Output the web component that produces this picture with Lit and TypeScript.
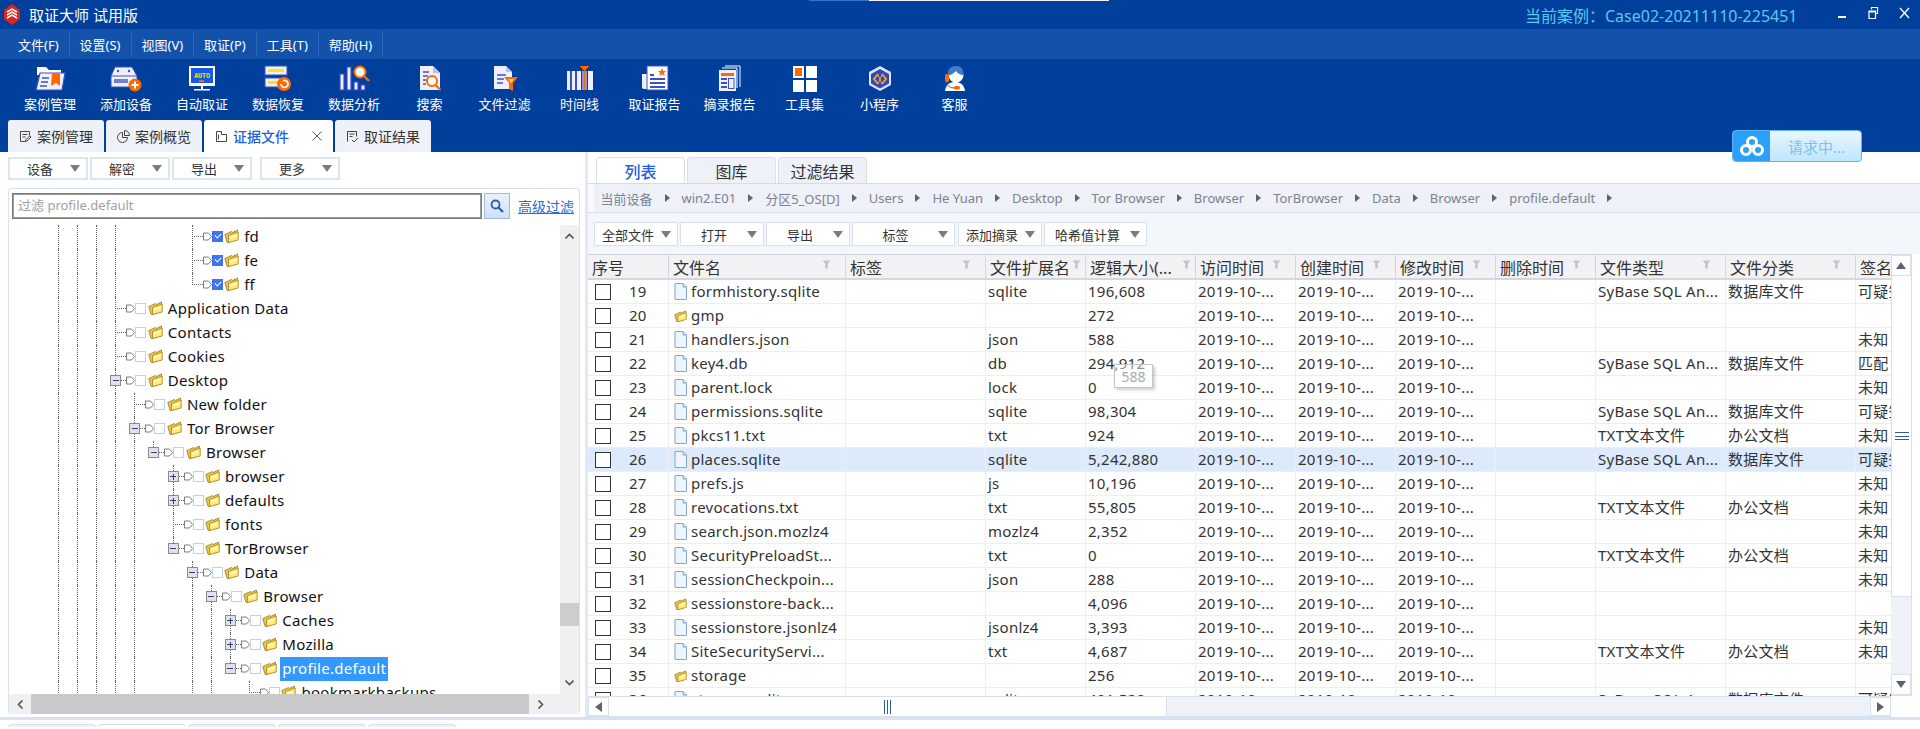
import { LitElement, html, css } from 'lit';
import { customElement } from 'lit/decorators.js';

const LINE = '#3f4fc8';
const ORANGE = '#ff6a00';
const PAPER = '#eef0fb';

const i = (body: unknown) => html`<svg class="tool-icon" viewBox="0 0 32 27">${body}</svg>`;

const toolbar = [
  { label: '案例管理', icon: i(html`<svg><path d="M3 2h9l3 3h12v5H3z" fill="#fff"/><path d="M6 8h25l-3 17H2z" fill="${PAPER}" stroke="${LINE}" stroke-width="1.2"/><path d="M8 13h7M7 17h7M6 21h7" stroke="${LINE}" stroke-width="1.6"/><path d="M18 8h8v13l-4-3-5 3z" fill="${ORANGE}"/></svg>`) },
  { label: '添加设备', icon: i(html`<svg><path d="M5 2h17l5 9v11H1V11z" fill="${PAPER}" stroke="${LINE}"/><path d="M1 11h26" stroke="${LINE}"/><rect x="4" y="14" width="14" height="4" fill="${LINE}" opacity=".7"/><circle cx="8" cy="6" r="1.2" fill="${LINE}"/><circle cx="19" cy="6" r="1.2" fill="${LINE}"/><circle cx="25" cy="20" r="6.5" fill="${ORANGE}"/><path d="M25 16.5v7M21.5 20h7" stroke="#fff" stroke-width="2"/></svg>`) },
  { label: '自动取证', icon: i(html`<svg><rect x="3" y="1" width="26" height="20" fill="#fff"/><rect x="5" y="3" width="22" height="15" fill="#1a56e8"/><text x="16" y="12.5" font-size="6.5" font-weight="700" fill="#ffe600" text-anchor="middle" font-family="Liberation Mono">AUTO</text><rect x="13" y="15" width="5" height="2" fill="${ORANGE}"/><path d="M15 21h2v3h-2zM8 24h16v1.500H8z" fill="#fff"/></svg>`) },
  { label: '数据恢复', icon: i(html`<svg><rect x="3" y="1" width="22" height="9" fill="${PAPER}" stroke="${LINE}"/><rect x="6" y="4" width="16" height="3" fill="#ffe600"/><rect x="3" y="13" width="22" height="9" fill="${PAPER}" stroke="${LINE}"/><rect x="6" y="16" width="10" height="3" fill="#ffe600"/><circle cx="22" cy="19" r="7" fill="${ORANGE}"/><path d="M19 19a3.500 3.500 0 1 0 2-3.200" fill="none" stroke="#fff" stroke-width="1.800"/></svg>`) },
  { label: '数据分析', icon: i(html`<svg><g fill="${PAPER}" stroke="${LINE}" stroke-width="1.2"><rect x="2" y="9" width="4" height="16"/><rect x="9" y="2" width="4" height="23"/><rect x="16" y="17" width="4" height="8"/><rect x="23" y="20" width="4" height="5"/></g><circle cx="22" cy="7" r="5.500" fill="#fff" stroke="${ORANGE}" stroke-width="2"/><path d="M26 11l5 5" stroke="${ORANGE}" stroke-width="2.400"/></svg>`) },
  { label: '搜索', icon: i(html`<svg><path d="M6 1h13l7 7v17H6z" fill="${PAPER}"/><path d="M19 1v7h7z" fill="#b8c0f0"/><path d="M9 7h6M9 11h5M9 15h3M9 19h3" stroke="${LINE}" stroke-width="1.600"/><circle cx="18" cy="16" r="5" fill="#fff" stroke="${ORANGE}" stroke-width="2"/><path d="M21.500 20l5 5" stroke="${ORANGE}" stroke-width="2.200"/></svg>`) },
  { label: '文件过滤', icon: i(html`<svg><path d="M5 1h12l6 6v17H5z" fill="${PAPER}"/><path d="M17 1v6h6z" fill="#b8c0f0"/><path d="M8 10h9M8 14h7M8 18h6" stroke="${LINE}" stroke-width="1.600"/><path d="M15 12h14l-5 6v8l-4-2v-6z" fill="${ORANGE}"/><path d="M19 14h6l-3 4z" fill="#ffd28a"/></svg>`) },
  { label: '时间线', icon: i(html`<svg><g fill="${PAPER}"><rect x="3" y="6" width="4" height="19"/><rect x="8" y="6" width="4" height="19"/><rect x="13" y="6" width="4" height="19"/><rect x="24" y="6" width="5" height="19"/></g><g fill="${LINE}"><rect x="6" y="6" width="2" height="19"/><rect x="11" y="6" width="2" height="19"/></g><rect x="18" y="6" width="5" height="19" fill="#8c98e8"/><rect x="19.500" y="6" width="2" height="19" fill="${ORANGE}"/><path d="M15.500 1h10l-5 5z" fill="${ORANGE}"/></svg>`) },
  { label: '取证报告', icon: i(html`<svg><path d="M3 9h6v15H5a2 2 0 0 1-2-2z" fill="${PAPER}"/><rect x="8" y="1" width="21" height="24" fill="#fff" stroke="${LINE}"/><path d="M11 10h4M11 14h15M11 18h15M11 22h15" stroke="${LINE}" stroke-width="2"/><path d="M23 3l1.200 3h3l-2.400 2 1 3-2.800-1.800-2.800 1.800 1-3-2.400-2h3z" fill="${ORANGE}"/></svg>`) },
  { label: '摘录报告', icon: i(html`<svg><path d="M11 1h15v21" fill="none" stroke="#fff"/><path d="M8 3h15v20" fill="none" stroke="#fff"/><rect x="5" y="5" width="17" height="21" fill="${PAPER}"/><rect x="7" y="8" width="13" height="3" fill="${ORANGE}"/><path d="M7 14h6M7 18h6M7 22h6" stroke="${LINE}" stroke-width="2"/><rect x="14.500" y="13.500" width="5.500" height="10" fill="none" stroke="${LINE}"/></svg>`) },
  { label: '工具集', icon: i(html`<svg><rect x="4" y="1" width="11" height="12" fill="#fff"/><rect x="6" y="3" width="7" height="8" fill="${ORANGE}"/><rect x="17" y="1" width="11" height="12" fill="#fff"/><rect x="4" y="15" width="11" height="12" fill="#fff"/><rect x="17" y="15" width="11" height="12" fill="#fff"/></svg>`) },
  { label: '小程序', icon: i(html`<svg><path d="M16 1l11 6v13l-11 6-11-6V7z" fill="#dfe6fb"/><path d="M16 4l9 5v9.500l-9 5-9-5V9z" fill="#3246c4"/><path d="M14 9l-4 5 4 5M18 9l4 5-4 5" fill="none" stroke="#ffae00" stroke-width="1.700"/><path d="M14 10l2 4-2 5M18 10l-2 4 2 5" fill="none" stroke="#ffae00" stroke-width="1"/></svg>`) },
  { label: '客服', icon: i(html`<svg><path d="M6 26c1-7 5-9 10-9s9 2 10 9z" fill="#fff"/><circle cx="17" cy="10" r="7.500" fill="#fff"/><path d="M9 11c-1-7 3-10 8-10s8 3 7 9c-3 0-6-2-7-4-2 2-5 4-8 5z" fill="#3f7cc8"/><rect x="6" y="9" width="4" height="8" rx="1.500" fill="${ORANGE}"/><path d="M8 17c0 4 3 6 8 6" fill="none" stroke="${LINE}"/><rect x="15" y="21" width="6" height="3.500" rx="1.500" fill="${ORANGE}"/></svg>`) },
];

const folder = html`<svg class="folder" viewBox="0 0 15 14"><path d="M.8 5.500L7.500 2.500l.8 1L13.500 1v9.500L4.500 13.500l-1.500-.2z" fill="#e8c452" stroke="#9a7a20" stroke-width=".8"/><path d="M4.500 6.500L14.200 3v8L4.500 13.500z" fill="#ffe96e" stroke="#a8831c" stroke-width=".8"/><path d="M6 7.500l6.500-2.300v3L6 10.500z" fill="#fff6b8"/></svg>`;
const fileIcon = html`<svg class="file" viewBox="0 0 13 17"><path d="M1 .5h8l3.500 3.500v12.500H1z" fill="#eef5fd" stroke="#7fa6d6"/><path d="M9 .5V4h3.500" fill="none" stroke="#7fa6d6"/></svg>`;
const funnel = html`<svg class="funnel" viewBox="0 0 10 10"><path d="M.5 .5h9l-3 3.500v5.500h-3V4z" fill="#c4c6cb"/></svg>`;
const caret = html`<i class="caret"></i>`;
const tag = html`<svg class="tag" viewBox="0 0 9 9"><path d="M.5 1h5l3 3.500-3 3.500h-5z" fill="#fff" stroke="#7c7c7c"/></svg>`;

interface TreeRow { col: number; lines: number[]; label: string; exp?: '+' | '-'; last?: boolean; on?: boolean; sel?: boolean }
const L4 = [0, 1, 2, 3, 4];
const tree: TreeRow[] = [
  { col: 7, lines: [0, 1, 2, 3], label: 'fd', on: true },
  { col: 7, lines: [0, 1, 2, 3], label: 'fe', on: true },
  { col: 7, lines: [0, 1, 2, 3], label: 'ff', on: true, last: true },
  { col: 3, lines: [0, 1, 2], label: 'Application Data' },
  { col: 3, lines: [0, 1, 2], label: 'Contacts' },
  { col: 3, lines: [0, 1, 2], label: 'Cookies' },
  { col: 3, lines: [0, 1, 2], label: 'Desktop', exp: '-' },
  { col: 4, lines: [0, 1, 2, 3], label: 'New folder' },
  { col: 4, lines: [0, 1, 2, 3], label: 'Tor Browser', exp: '-' },
  { col: 5, lines: L4, label: 'Browser', exp: '-', last: true },
  { col: 6, lines: L4, label: 'browser', exp: '+' },
  { col: 6, lines: L4, label: 'defaults', exp: '+' },
  { col: 6, lines: L4, label: 'fonts' },
  { col: 6, lines: L4, label: 'TorBrowser', exp: '-', last: true },
  { col: 7, lines: L4, label: 'Data', exp: '-' },
  { col: 8, lines: [...L4, 7], label: 'Browser', exp: '-' },
  { col: 9, lines: [...L4, 7, 8], label: 'Caches', exp: '+' },
  { col: 9, lines: [...L4, 7, 8], label: 'Mozilla', exp: '+' },
  { col: 9, lines: [...L4, 7, 8], label: 'profile.default', exp: '-', last: true, sel: true },
  { col: 10, lines: [...L4, 7, 8], label: 'bookmarkbackups' },
];

const SQL = 'SyBase SQL An...';
const TXT = 'TXT文本文件';
const DB = '数据库文件';
const OFFICE = '办公文档';
const SUS = '可疑签名';
// no, name, folder?, ext, size, type, category, signature
type Row = [number, string, boolean, string, string, string, string, string];
const rows: Row[] = [
  [19, 'formhistory.sqlite', false, 'sqlite', '196,608', SQL, DB, SUS],
  [20, 'gmp', true, '', '272', '', '', ''],
  [21, 'handlers.json', false, 'json', '588', '', '', '未知'],
  [22, 'key4.db', false, 'db', '294,912', SQL, DB, '匹配'],
  [23, 'parent.lock', false, 'lock', '0', '', '', '未知'],
  [24, 'permissions.sqlite', false, 'sqlite', '98,304', SQL, DB, SUS],
  [25, 'pkcs11.txt', false, 'txt', '924', TXT, OFFICE, '未知'],
  [26, 'places.sqlite', false, 'sqlite', '5,242,880', SQL, DB, SUS],
  [27, 'prefs.js', false, 'js', '10,196', '', '', '未知'],
  [28, 'revocations.txt', false, 'txt', '55,805', TXT, OFFICE, '未知'],
  [29, 'search.json.mozlz4', false, 'mozlz4', '2,352', '', '', '未知'],
  [30, 'SecurityPreloadSt...', false, 'txt', '0', TXT, OFFICE, '未知'],
  [31, 'sessionCheckpoin...', false, 'json', '288', '', '', '未知'],
  [32, 'sessionstore-back...', true, '', '4,096', '', '', ''],
  [33, 'sessionstore.jsonlz4', false, 'jsonlz4', '3,393', '', '', '未知'],
  [34, 'SiteSecurityServi...', false, 'txt', '4,687', TXT, OFFICE, '未知'],
  [35, 'storage', true, '', '256', '', '', ''],
  [36, 'storage.sqlite', false, 'sqlite', '491,520', SQL, DB, SUS],
];

const crumbs = ['当前设备', 'win2.E01', '分区5_OS[D]', 'Users', 'He Yuan', 'Desktop', 'Tor Browser', 'Browser', 'TorBrowser', 'Data', 'Browser', 'profile.default'];
const headers = ['文件名', '标签', '文件扩展名', '逻辑大小(...', '访问时间', '创建时间', '修改时间', '删除时间', '文件类型', '文件分类'];

@customElement('app-root')
export class AppRoot extends LitElement {
  static styles = css`
    :host {
      display: block;
      position: relative;
      width: 1920px;
      height: 729px;
      overflow: hidden;
      background: #fff;
      font-family: "Noto Sans", "Noto Sans CJK SC", sans-serif;
      color: #2b2b2b;
    }
    * { box-sizing: border-box; }
    svg { display: block; flex: none; }

    .strip { position: absolute; top: 0; left: 809px; width: 300px; height: 1px; background: linear-gradient(90deg, #2a78c8 20%, #f2f2f2 20%); }
    .title { height: 29px; background: #00409c; display: flex; align-items: center; color: #fff; font-size: 15px; padding-left: 3px; }
    .title .logo { width: 18px; height: 21px; margin-right: 8px; }
    .case { margin-left: auto; color: #5ac8f0; font-size: 16px; width: 395px; }
    .win { display: flex; gap: 20px; position: absolute; right: 10px; top: 7px; }
    .win svg { width: 11px; height: 12px; }

    .menu { height: 30px; background: #1352ab; display: flex; color: #fff; font-size: 13px; padding-left: 8px; }
    .menu span { display: flex; align-items: center; height: 26px; margin-top: 2px; padding: 0 10px; border-right: 1px solid #2b66b8; }

    .band { height: 93px; background: #00409c; display: flex; flex-direction: column; }
    .tools { display: flex; padding-left: 12px; height: 61px; }
    .tool { width: 75px; display: flex; flex-direction: column; align-items: center; color: #fff; font-size: 13px; padding-top: 6px; gap: 2px; }
    .tool:nth-child(-n+5) { width: 76px; }
    .tool-icon { width: 32px; height: 27px; }
    .doc-tabs { display: flex; gap: 2px; padding-left: 8px; height: 32px; }
    .doc-tab { width: 96px; background: #eef1f7; border-radius: 3px 3px 0 0; display: flex; align-items: center; justify-content: center; gap: 5px; font-size: 14px; color: #333; }
    .doc-tab svg { width: 13px; height: 13px; }
    .doc-tab.active { width: 129px; background: #fff; color: #1f5fe0; font-weight: 500; justify-content: flex-start; padding-left: 11px; }
    .doc-tab .x { margin-left: 17px; width: 12px; height: 12px; }

    .main { display: flex; height: 565px; }
    .left { padding: 5px 0 0 8px; border-right: 3px solid #e3e9f4; flex: none; width: 588px; }
    .btns { display: flex; gap: 2px; height: 23px; }
    .btn { display: flex; align-items: center; background: #fff; border: 2px solid #dde5f1; font-size: 13px; width: 80px; height: 100%; padding-right: 6px; color: #333; }
    .btn span { flex: 1; text-align: center; white-space: nowrap; }
    .btn.more { margin-left: 6px; }
    .caret { flex: none; border: 5.5px solid transparent; border-top: 7px solid #7c7c7c; border-bottom: 0; }

    .panel { margin-top: 8px; width: 572px; height: 526px; border: 1px solid #d8e2f0; border-radius: 3px; display: flex; flex-direction: column; }
    .filter { display: flex; align-items: center; height: 26px; margin-top: 4px; padding-left: 3px; flex: none; }
    .input { width: 470px; height: 26px; border: 1px solid #7b7b7b; outline: 1px solid #9a9a9a; outline-offset: -2px; font-size: 13px; color: #a0a0a0; display: flex; align-items: center; padding: 0 0 3px 5px; }
    .search { width: 26px; height: 26px; margin-left: 2px; border: 1px solid #9ebbe0; background: linear-gradient(#eaf2fc, #cfe0f5); display: flex; align-items: center; justify-content: center; }
    .search svg { width: 14px; height: 14px; }
    .adv { margin-left: 8px; font-size: 14px; color: #2b6ad9; text-decoration: underline; }
    .tree-wrap { display: flex; margin-top: 6px; height: 469px; flex: none; }
    .tree { width: 551px; overflow: hidden; padding-left: 49px; }
    .t-row { height: 24px; display: flex; align-items: center; font-size: 15px; letter-spacing: .3px; color: #111; white-space: nowrap; }
    .guide { width: 19.1px; height: 24px; flex: none; }
    .guide.on { border-left: 1px dotted #666; }
    .conn { position: relative; width: 11px; height: 24px; flex: none; }
    .conn::before { content: ""; position: absolute; left: 0; top: 0; bottom: 0; border-left: 1px dotted #666; }
    .conn.last::before { bottom: 12px; }
    .conn::after { content: ""; position: absolute; left: 0; right: 0; top: 11px; border-top: 1px dotted #666; }
    .exp { position: absolute; z-index: 1; left: -5px; top: 6px; width: 11px; height: 11px; background: #e2e2e4; border: 1px solid #8a8a8a; display: flex; align-items: center; justify-content: center; color: #2b3f8a; }
    .exp i { position: absolute; left: 1.5px; right: 1.5px; top: 4px; height: 1px; background: currentColor; }
    .exp b { position: absolute; top: 1.5px; bottom: 1.5px; left: 4px; width: 1px; background: currentColor; }
    .tag { width: 9px; height: 9px; margin-top: -2px; }
    .cb { width: 11px; height: 11px; border: 1px solid #bcd0f2; background: #fff; margin-top: -2px; flex: none; }
    .cb.on { background: #3f74f0; border-color: #3f74f0; position: relative; }
    .cb.on::after { content: ""; position: absolute; left: 2px; top: 1px; width: 5px; height: 3px; border-left: 1.5px solid #fff; border-bottom: 1.5px solid #fff; transform: rotate(-45deg); }
    .folder { width: 15px; height: 14px; }
    .t-row .folder { margin: -2px 3px 0 1.500px; }
    .t-label { padding: 0 2px; height: 24px; line-height: 23px; }
    .t-label.sel { background: #3399ff; color: #fff; }

    .vbar { width: 19px; background: #f0f0f0; position: relative; display: flex; flex-direction: column; justify-content: space-between; align-items: center; padding: 7px 0; }
    .vbar .thumb { position: absolute; left: 0; right: 0; top: 378px; height: 23px; background: #cdcdcd; }
    .hbar { height: 20px; background: #f0f0f0; display: flex; align-items: center; flex: none; }
    .hbar .end { width: 22px; display: flex; justify-content: center; flex: none; }
    .hbar .thumb { width: 498px; height: 20px; background: #c9c9c9; }
    .chev { width: 9px; height: 9px; }

    .right { flex: 1; min-width: 0; display: flex; flex-direction: column; }
    .tabs { display: flex; gap: 2px; padding: 5px 0 0 8px; height: 31px; flex: none; }
    .tab { width: 89px; height: 26px; background: #eef1f7; border: 1px solid #d8deeb; border-bottom: 0; border-radius: 4px 4px 0 0; font-size: 16px; display: flex; align-items: center; justify-content: center; color: #333; }
    .tab.active { background: #fff; color: #1f5fe0; font-weight: 500; }
    .crumbs { height: 30px; flex: none; border-top: 1px solid #d5d9e8; border-bottom: 1px solid #d9e0ee; background: linear-gradient(90deg, #f7f9fc 6px, #eef1f7 6px); display: flex; align-items: center; padding-left: 12.5px; font-size: 13px; color: #7d8290; gap: 12px; }
    .crumbs i { border: 4.5px solid transparent; border-left: 5px solid #5d6270; border-right: 0; flex: none; }
    .actions { height: 41px; flex: none; background: #f3f6fb; display: flex; gap: 2px; padding: 9px 0 8px 6px; }
    .actions .btn { border-width: 1px; border-color: #d6e0ef; width: 84px; }
    .actions .wide { width: 103px; }
    .actions .gap { margin-left: 1px; }

    .grid { display: flex; height: 442px; flex: none; }
    .table { width: 1303px; overflow: hidden; flex: none; }
    .tr { display: grid; grid-template-columns: 81px 177px 140px 100px 110px 100px 100px 100px 100px 130px 130px 35px; }
    .head { height: 26px; background: #f2f2f4; border-top: 1px solid #cfd2da; border-bottom: 2px solid #d5d6e0; }
    .th { display: flex; align-items: center; justify-content: space-between; padding: 0 14px 0 4px; font-size: 16px; border-right: 1px solid #d5d6e0; white-space: nowrap; overflow: hidden; color: #333; min-width: 0; }
    .th:last-child { border-right: 0; overflow: hidden; padding-right: 0; justify-content: flex-start; }
    .funnel { width: 9px; height: 9px; margin-top: -4px; flex: none; }
    .th.tight { padding-right: 4px; }
    .body { height: 416px; overflow: hidden; }
    .body .tr { height: 24px; border-bottom: 1px solid #eeeeee; }
    .body .tr.hl { background: #dceafb; }
    .td { display: flex; align-items: center; font-size: 15px; letter-spacing: .25px; padding: 0 0 2px 2px; border-right: 1px solid #eeeeee; white-space: nowrap; overflow: hidden; color: #333; min-width: 0; }
    .td:last-child { border-right: 0; }
    .td.no { padding-left: 7px; }
    .td.no .box { width: 16px; height: 16px; border: 1px solid #333; background: #fff; flex: none; margin: 2px 18px 0 0; }
    .td.name { padding-left: 5px; gap: 4px; }
    .td.name svg { margin-top: 2px; }
    .file { width: 13px; height: 17px; }
    .td.name .folder { width: 13px; }

    .vs { width: 21px; display: flex; flex-direction: column; background: #eef1f7; border: 1px solid #d6e0ef; border-left: 0; height: 442px; }
    .vs .up, .vs .down { height: 21px; background: #fff; flex: none; display: flex; align-items: center; justify-content: center; border: 1px solid #d6e0ef; }
    .vs .tri-up { border: 5.5px solid transparent; border-bottom: 7px solid #5d6270; border-top: 0; }
    .vs .tri-down { border: 5.5px solid transparent; border-top: 7px solid #5d6270; border-bottom: 0; }
    .vs .th-v { height: 321px; flex: none; background: #fff; border-bottom: 1px solid #d6e0ef; display: flex; align-items: center; justify-content: center; border-left: 1px solid #d6e0ef; }
    .vs .track { flex: 1; }
    .grip-v { width: 14px; height: 8px; border-top: 1px solid #2a5ca8; border-bottom: 1px solid #2a5ca8; position: relative; }
    .grip-v::after { content: ""; position: absolute; left: 0; right: 0; top: 2.5px; height: 1px; background: #2a5ca8; }

    .hs { display: flex; height: 21px; width: 1303px; flex: none; background: #eef1f7; border-top: 1px solid #d6e0ef; border-bottom: 1px solid #d6e0ef; }
    .hs .arr { width: 21px; background: #fff; flex: none; display: flex; align-items: center; justify-content: center; border: 1px solid #d6e0ef; }
    .hs .tri-l { border: 5.5px solid transparent; border-right: 7px solid #5d6270; border-left: 0; }
    .hs .tri-r { border: 5.5px solid transparent; border-left: 7px solid #5d6270; border-right: 0; }
    .hs .h-thumb { width: 558px; background: #fff; flex: none; border-right: 1px solid #d6e0ef; display: flex; justify-content: center; align-items: center; }
    .grip-h { height: 14px; width: 7px; border-left: 1px solid #2a5ca8; border-right: 1px solid #2a5ca8; position: relative; }
    .grip-h::after { content: ""; position: absolute; top: 0; bottom: 0; left: 2px; width: 1px; background: #2a5ca8; }
    .hs .fill { flex: 1; }

    .foot { height: 3px; background: #d8e2f0; }
    .bottom-tabs { display: flex; gap: 2px; padding: 4px 0 0 8px; height: 7px; overflow: hidden; }
    .bottom-tabs span { width: 88px; height: 10px; background: #eef1f7; border: 1px solid #d8deeb; border-radius: 3px 3px 0 0; flex: none; }
    .bottom-tabs span.cur { background: #fff; }

    .tip { position: absolute; left: 1114px; top: 364px; width: 39px; height: 24px; background: rgba(255,255,255,.45); border: 1px solid #c4c4c4; box-shadow: 2px 2px 3px rgba(0,0,0,.2); font-size: 14px; color: #aaa; display: flex; align-items: center; justify-content: center; }
    .req { position: absolute; left: 1732px; top: 130px; width: 130px; height: 32px; border: 1px solid #5fb4f7; border-radius: 4px; display: flex; overflow: hidden; background: linear-gradient(#e8f6ff, #bfe6ff); font-size: 15px; color: #7cc0f0; }
    .req .cloud { width: 37px; background: #2ba0f8; display: flex; align-items: center; justify-content: center; flex: none; }
    .req .cloud svg { width: 26px; height: 22px; }
    .req .msg { flex: 1; display: flex; align-items: center; justify-content: center; padding-left: 2px; }
  `;

  private renderTree(r: TreeRow) {
    const guides = [];
    for (let c = 0; c < r.col; c++) {
      guides.push(html`<span class="guide ${r.lines.includes(c) ? 'on' : ''}"></span>`);
    }
    return html`<div class="t-row">
      ${guides}
      <span class="conn ${r.last ? 'last' : ''}">
        ${r.exp ? html`<span class="exp"><i></i>${r.exp === '+' ? html`<b></b>` : ''}</span>` : ''}
      </span>
      ${tag}
      <span class="cb ${r.on ? 'on' : ''}"></span>
      ${folder}
      <span class="t-label ${r.sel ? 'sel' : ''}">${r.label}</span>
    </div>`;
  }

  private renderRow(r: Row) {
    const [no, name, isDir, ext, size, type, cat, sig] = r;
    return html`<div class="tr ${no === 26 ? 'hl' : ''}">
      <div class="td no"><span class="box"></span>${no}</div>
      <div class="td name">${isDir ? folder : fileIcon}${name}</div>
      <div class="td"></div>
      <div class="td">${ext}</div>
      <div class="td">${size}</div>
      <div class="td">2019-10-...</div>
      <div class="td">2019-10-...</div>
      <div class="td">2019-10-...</div>
      <div class="td"></div>
      <div class="td">${type}</div>
      <div class="td">${cat}</div>
      <div class="td">${sig}</div>
    </div>`;
  }

  render() {
    return html`
      <div class="strip"></div>
      <div class="title">
        <svg class="logo" viewBox="0 0 18 21"><path d="M9 0l8 6v9l-8 6-8-6V6z" fill="#d8261c"/><path d="M4 8l5-3 5 3M4 11l5-3 5 3M4 14l5-3 5 3" fill="none" stroke="#fff" stroke-width="1.500"/></svg>
        取证大师 试用版
        <span class="case">当前案例：Case02-20211110-225451</span>
      </div>
      <div class="win">
        <svg viewBox="0 0 11 12"><path d="M1 9h8v2H1z" fill="#fff"/></svg>
        <svg viewBox="0 0 11 12"><path d="M3.500 2.500V.5h6v6h-2M1 4h6.500v7.500H1z" fill="none" stroke="#fff" stroke-width="1.200"/><path d="M1 4h6.500v1.500H1z" fill="#fff"/></svg>
        <svg viewBox="0 0 11 12"><path d="M1 1l9 10M10 1L1 11" stroke="#fff" stroke-width="1.300"/></svg>
      </div>
      <div class="menu">
        ${['文件(F)', '设置(S)', '视图(V)', '取证(P)', '工具(T)', '帮助(H)'].map(m => html`<span>${m}</span>`)}
      </div>
      <div class="band">
        <div class="tools">
          ${toolbar.map(t => html`<div class="tool">${t.icon}<span>${t.label}</span></div>`)}
        </div>
        <div class="doc-tabs">
          <div class="doc-tab"><svg viewBox="0 0 13 13"><path d="M1.500 1.500h9v4M1.500 1.500v10h5M3.500 4.500h5M3.500 7h3M8 11l4-4-1.200-1.200-4 4-.3 1.500z" fill="none" stroke="#444"/></svg>案例管理</div>
          <div class="doc-tab"><svg viewBox="0 0 13 13"><path d="M5.500 2.500a5 5 0 1 0 5 5h-5zM7.500 .5a5 5 0 0 1 5 5h-5z" fill="none" stroke="#444"/></svg>案例概览</div>
          <div class="doc-tab active"><svg viewBox="0 0 13 13"><path d="M1.500 1.500h5v3h5v7h-10zM3.500 4.500v5" fill="none" stroke="#444"/></svg>证据文件<svg class="x" viewBox="0 0 12 12"><path d="M1.500 1.500l9 9M10.500 1.500l-9 9" stroke="#555"/></svg></div>
          <div class="doc-tab"><svg viewBox="0 0 13 13"><path d="M1.500 11.500v-10h9v5M3.500 4h5M3.500 6.500h3M6 10l2 2 4-4" fill="none" stroke="#444"/></svg>取证结果</div>
        </div>
      </div>
      <div class="main">
        <div class="left">
          <div class="btns">
            <div class="btn"><span>设备</span>${caret}</div>
            <div class="btn"><span>解密</span>${caret}</div>
            <div class="btn"><span>导出</span>${caret}</div>
            <div class="btn more"><span>更多</span>${caret}</div>
          </div>
          <div class="panel">
            <div class="filter">
              <div class="input">过滤 profile.default</div>
              <div class="search"><svg viewBox="0 0 14 14"><circle cx="5.500" cy="5.500" r="4" fill="none" stroke="#2a5caa" stroke-width="1.800"/><path d="M8.500 8.500l4.500 4.500" stroke="#2a5caa" stroke-width="2.200"/></svg></div>
              <span class="adv">高级过滤</span>
            </div>
            <div class="tree-wrap">
              <div class="tree">${tree.map(r => this.renderTree(r))}</div>
              <div class="vbar">
                <svg class="chev" viewBox="0 0 9 9"><path d="M.5 6.500l4-4 4 4" fill="none" stroke="#555" stroke-width="1.600"/></svg>
                <div class="thumb"></div>
                <svg class="chev" viewBox="0 0 9 9"><path d="M.5 2.500l4 4 4-4" fill="none" stroke="#555" stroke-width="1.600"/></svg>
              </div>
            </div>
            <div class="hbar">
              <span class="end"><svg class="chev" viewBox="0 0 9 9"><path d="M6.500 .5l-4 4 4 4" fill="none" stroke="#555" stroke-width="1.600"/></svg></span>
              <div class="thumb"></div>
              <span class="end"><svg class="chev" viewBox="0 0 9 9"><path d="M2.500 .5l4 4-4 4" fill="none" stroke="#555" stroke-width="1.600"/></svg></span>
            </div>
          </div>
        </div>
        <div class="right">
          <div class="tabs">
            <div class="tab active">列表</div>
            <div class="tab">图库</div>
            <div class="tab">过滤结果</div>
          </div>
          <div class="crumbs">
            ${crumbs.map(c => html`<span>${c}</span><i></i>`)}
          </div>
          <div class="actions">
            <div class="btn"><span>全部文件</span>${caret}</div>
            <div class="btn"><span>打开</span>${caret}</div>
            <div class="btn"><span>导出</span>${caret}</div>
            <div class="btn wide"><span>标签</span>${caret}</div>
            <div class="btn gap"><span>添加摘录</span>${caret}</div>
            <div class="btn wide"><span>哈希值计算</span>${caret}</div>
          </div>
          <div class="grid">
            <div class="table">
              <div class="tr head">
                <div class="th">序号</div>
                ${headers.map((h, n) => html`<div class="th ${n === 2 || n === 3 ? 'tight' : ''}">${h}${funnel}</div>`)}
                <div class="th">签名</div>
              </div>
              <div class="body">${rows.map(r => this.renderRow(r))}</div>
            </div>
            <div class="vs">
              <div class="up"><span class="tri-up"></span></div>
              <div class="th-v"><span class="grip-v"></span></div>
              <div class="track"></div>
              <div class="down"><span class="tri-down"></span></div>
            </div>
          </div>
          <div class="hs">
            <div class="arr"><span class="tri-l"></span></div>
            <div class="h-thumb"><span class="grip-h"></span></div>
            <div class="fill"></div>
            <div class="arr"><span class="tri-r"></span></div>
          </div>
        </div>
      </div>
      <div class="foot"></div>
      <div class="bottom-tabs">
        <span></span><span class="cur"></span><span></span><span></span><span></span>
      </div>
      <div class="tip">588</div>
      <div class="req">
        <div class="cloud"><svg viewBox="0 0 26 22"><g fill="none" stroke="#fff" stroke-width="3"><circle cx="13" cy="7" r="4.500"/><circle cx="7" cy="15" r="4.500"/><circle cx="19" cy="15" r="4.500"/></g></svg></div>
        <div class="msg">请求中...</div>
      </div>
    `;
  }
}
